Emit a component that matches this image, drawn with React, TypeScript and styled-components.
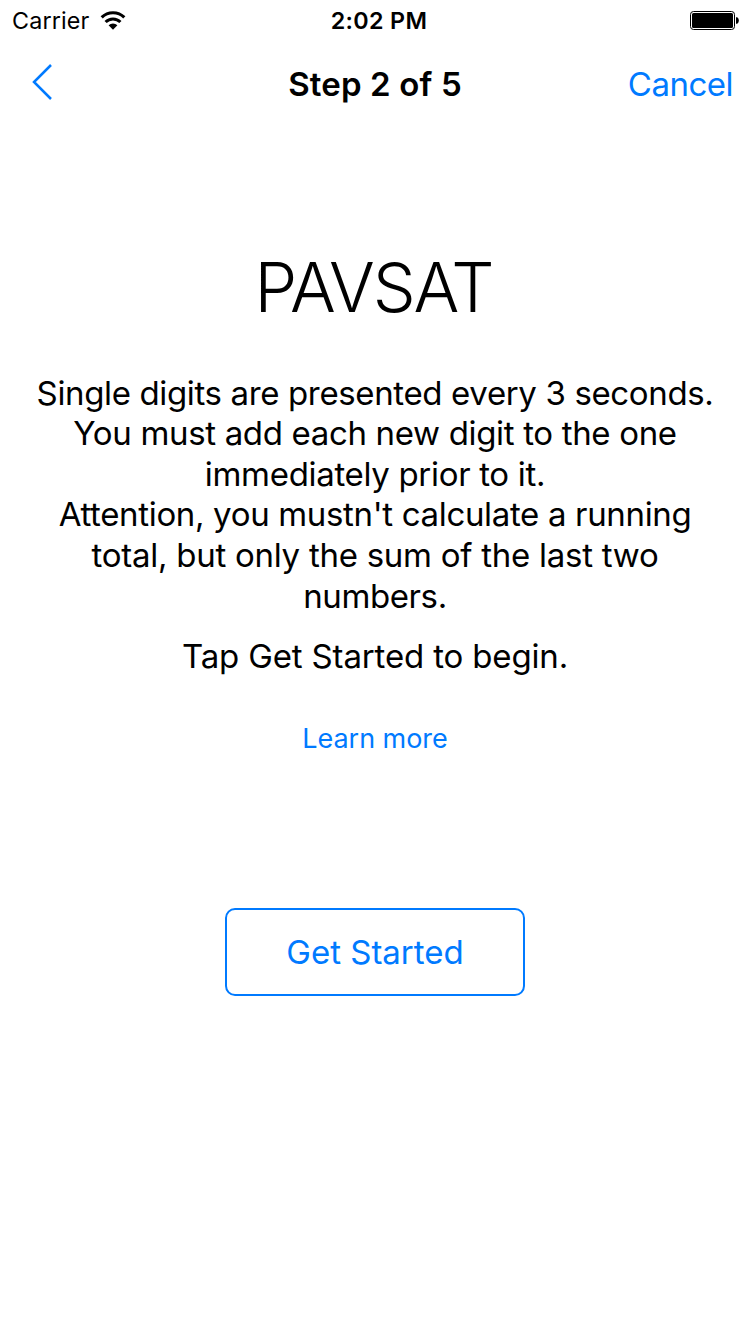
import React from 'react';
import styled, { createGlobalStyle } from 'styled-components';

const Global = createGlobalStyle`
  * { box-sizing: border-box; }
  body { margin: 0; background: #fff; color: #000; font-family: Inter, sans-serif; }
`;
const Screen = styled.div`
  display: flex; flex-direction: column; height: 1332px; overflow: hidden;
`;
const StatusBar = styled.header`
  display: grid; grid-template-columns: 1fr auto 1fr; align-items: center;
  height: 41px; padding: 0 11px 0 12px; font-size: 23.3px;
`;
const Carrier = styled.div`
  display: flex; align-items: center; gap: 10.5px; letter-spacing: 0.15px;
`;
const Clock = styled.div`
  font-weight: 600; letter-spacing: 0.35px; padding-left: 7px;
`;
const BatterySlot = styled.div`
  display: flex; justify-content: flex-end;
`;
const NavBar = styled.nav`
  display: grid; grid-template-columns: minmax(0, 1fr) auto minmax(0, 1fr); align-items: center;
  height: 85px; padding: 0 17px; font-size: 33px;
`;
const BackButton = styled.button`
  display: flex; border: 0; padding: 0; background: none; margin: -4px 0 0 15px;
`;
const NavTitle = styled.h1`
  margin: 0; font-size: 33px; font-weight: 600; letter-spacing: 0.15px;
`;
const CancelButton = styled.button`
  border: 0; padding: 0; background: none; font: inherit; color: #007aff; justify-self: end; letter-spacing: -0.5px;
`;
const Content = styled.main`
  display: flex; flex-direction: column; align-items: center; text-align: center; padding-top: 119px;
`;
const Title = styled.h2`
  margin: 0 0 43.55px; padding-right: 3px; font-size: 68px; line-height: 84px; font-weight: 300; letter-spacing: -2.15px;
`;
const Line = styled.div<{ $spacing: number }>`
  font-size: 33px; line-height: 40.6px; white-space: nowrap; letter-spacing: ${p => p.$spacing}px;
`;
const Prompt = styled.p`
  margin: 19.45px 0 0; font-size: 33px; line-height: 41px; letter-spacing: -0.15px;
`;
const LearnMore = styled.a`
  margin-top: 45px; font-size: 27px; line-height: 34px; color: #007aff; letter-spacing: -0.05px;
`;
const StartButton = styled.button`
  width: 300px; height: 88px; margin-top: 152px; border: 2px solid #007aff; border-radius: 10px;
  background: none; color: #007aff; font: inherit; font-size: 33px;
`;

const lines: [string, number][] = [
  ['Single digits are presented every 3 seconds.', -0.36],
  ['You must add each new digit to the one', -0.335],
  ['immediately prior to it.', -0.32],
  ["Attention, you mustn't calculate a running", -0.335],
  ['total, but only the sum of the last two', -0.26],
  ['numbers.', -0.4],
];

export default function App() {
  return (
    <Screen>
      <Global />
      <StatusBar>
        <Carrier>
          Carrier
          <svg width="26" height="20" viewBox="0 0 26 20" fill="none" stroke="#000" strokeWidth="3.1">
            <path d="M1.7 6.4a16 16 0 0 1 22.6 0M5.6 11a10.5 10.5 0 0 1 14.8 0" />
            <path d="M13 18.8l-4.4-4.5a6.2 6.2 0 0 1 8.8 0z" fill="#000" stroke="none" />
          </svg>
        </Carrier>
        <Clock>2:02 PM</Clock>
        <BatterySlot>
          <svg width="49" height="19" viewBox="0 0 49 19">
            <rect x="0.5" y="0.5" width="44" height="18" rx="3" fill="none" stroke="#000" />
            <rect x="2" y="2" width="41" height="15" rx="1.5" />
            <path d="M46 6.2h1c2.4 1 2.4 5.6 0 6.6h-1z" />
          </svg>
        </BatterySlot>
      </StatusBar>
      <NavBar>
        <BackButton aria-label="Back">
          <svg width="21" height="36" viewBox="0 0 21 36" fill="none" stroke="#007aff" strokeWidth="2.5">
            <path d="M19 1L2 18l17 17" />
          </svg>
        </BackButton>
        <NavTitle>Step 2 of 5</NavTitle>
        <CancelButton>Cancel</CancelButton>
      </NavBar>
      <Content>
        <Title>PAVSAT</Title>
        {lines.map(([text, spacing]) => <Line key={text} $spacing={spacing}>{text}</Line>)}
        <Prompt>Tap Get Started to begin.</Prompt>
        <LearnMore>Learn more</LearnMore>
        <StartButton>Get Started</StartButton>
      </Content>
    </Screen>
  );
}
